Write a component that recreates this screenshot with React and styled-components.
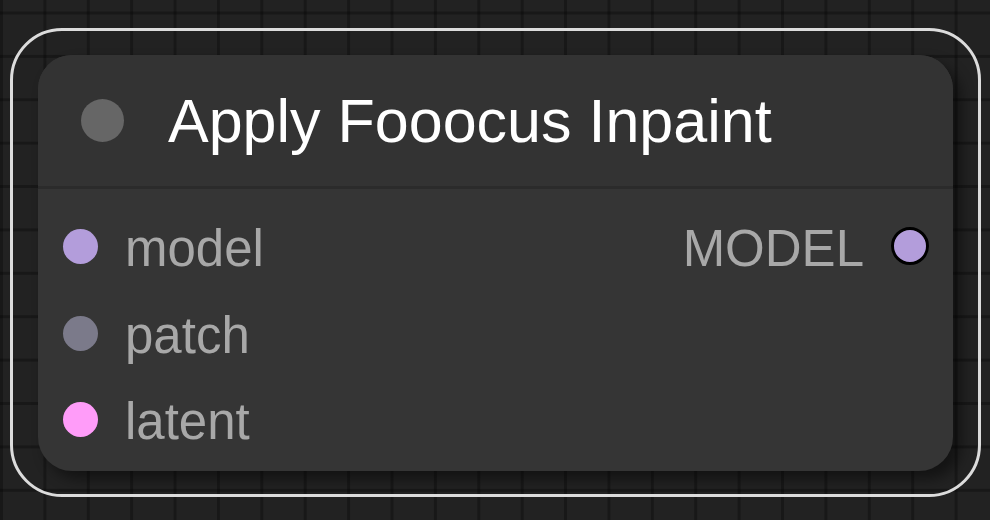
import React from 'react';
import styled, { createGlobalStyle } from 'styled-components';

const GlobalStyle = createGlobalStyle`
  html, body {
    margin: 0;
    padding: 0;
    background: #222222;
  }
`;

const Canvas = styled.div`
  width: 990px;
  height: 520px;
  box-sizing: border-box;
  padding: 28px 0 0 10px;
  background-color: #222222;
  background-image:
    linear-gradient(90deg, rgba(0, 0, 0, 0.3) 3px, transparent 3px),
    linear-gradient(180deg, rgba(0, 0, 0, 0.3) 3px, transparent 3px);
  background-size: 43.4px 43.4px;
  background-position: 43.4px 11.5px;
  font-family: 'Liberation Sans', Arial, sans-serif;
  overflow: hidden;
`;

const Selection = styled.div`
  width: 971px;
  height: 469px;
  box-sizing: border-box;
  border: 3px solid #dcdcdc;
  border-radius: 52px;
  padding: 24px 25px 23px 25px;
`;

const Node = styled.div`
  width: 915px;
  height: 416px;
  background: #353535;
  border-radius: 34px;
  box-shadow: 8px 8px 14px rgba(0, 0, 0, 0.45);
  display: flex;
  flex-direction: column;
  overflow: hidden;
`;

const TitleBar = styled.div`
  height: 131px;
  background: #333333;
  border-bottom: 3px solid #2b2b2b;
  display: flex;
  align-items: center;
  padding-left: 43px;
  gap: 44px;
`;

const TitleDot = styled.span`
  width: 43px;
  height: 43px;
  border-radius: 50%;
  background: #666666;
  flex-shrink: 0;
`;

const Title = styled.div`
  color: #ffffff;
  font-size: 61px;
  line-height: 1;
  margin-top: 2px;
`;

const Body = styled.div`
  display: flex;
  justify-content: space-between;
  padding: 14px 24px 0 25px;
`;

const Column = styled.div`
  display: flex;
  flex-direction: column;
  align-items: ${p => (p.$right ? 'flex-end' : 'flex-start')};
`;

const Slot = styled.div`
  height: 86.7px;
  display: flex;
  align-items: center;
  gap: 27px;
  flex-direction: ${p => (p.$right ? 'row-reverse' : 'row')};
`;

const Dot = styled.span`
  width: ${p => (p.$outlined ? 32 : 35)}px;
  height: ${p => (p.$outlined ? 32 : 35)}px;
  border-radius: 50%;
  background: ${p => p.$color};
  border: ${p => (p.$outlined ? '3px solid #000' : 'none')};
  flex-shrink: 0;
`;

const Label = styled.span`
  color: #a8a8a8;
  font-size: 51px;
  line-height: 1;
  margin-top: 4px;
`;

const inputs = [
  { name: 'model', color: '#b39ddb' },
  { name: 'patch', color: '#7b7a8a' },
  { name: 'latent', color: '#ff9cf9' },
];

export default function App() {
  return (
    <>
      <GlobalStyle />
      <Canvas>
        <Selection>
          <Node>
            <TitleBar>
              <TitleDot />
              <Title>Apply Fooocus Inpaint</Title>
            </TitleBar>
            <Body>
              <Column>
                {inputs.map(i => (
                  <Slot key={i.name}>
                    <Dot $color={i.color} />
                    <Label>{i.name}</Label>
                  </Slot>
                ))}
              </Column>
              <Column $right>
                <Slot $right>
                  <Dot $color="#b39ddb" $outlined />
                  <Label>MODEL</Label>
                </Slot>
              </Column>
            </Body>
          </Node>
        </Selection>
      </Canvas>
    </>
  );
}
